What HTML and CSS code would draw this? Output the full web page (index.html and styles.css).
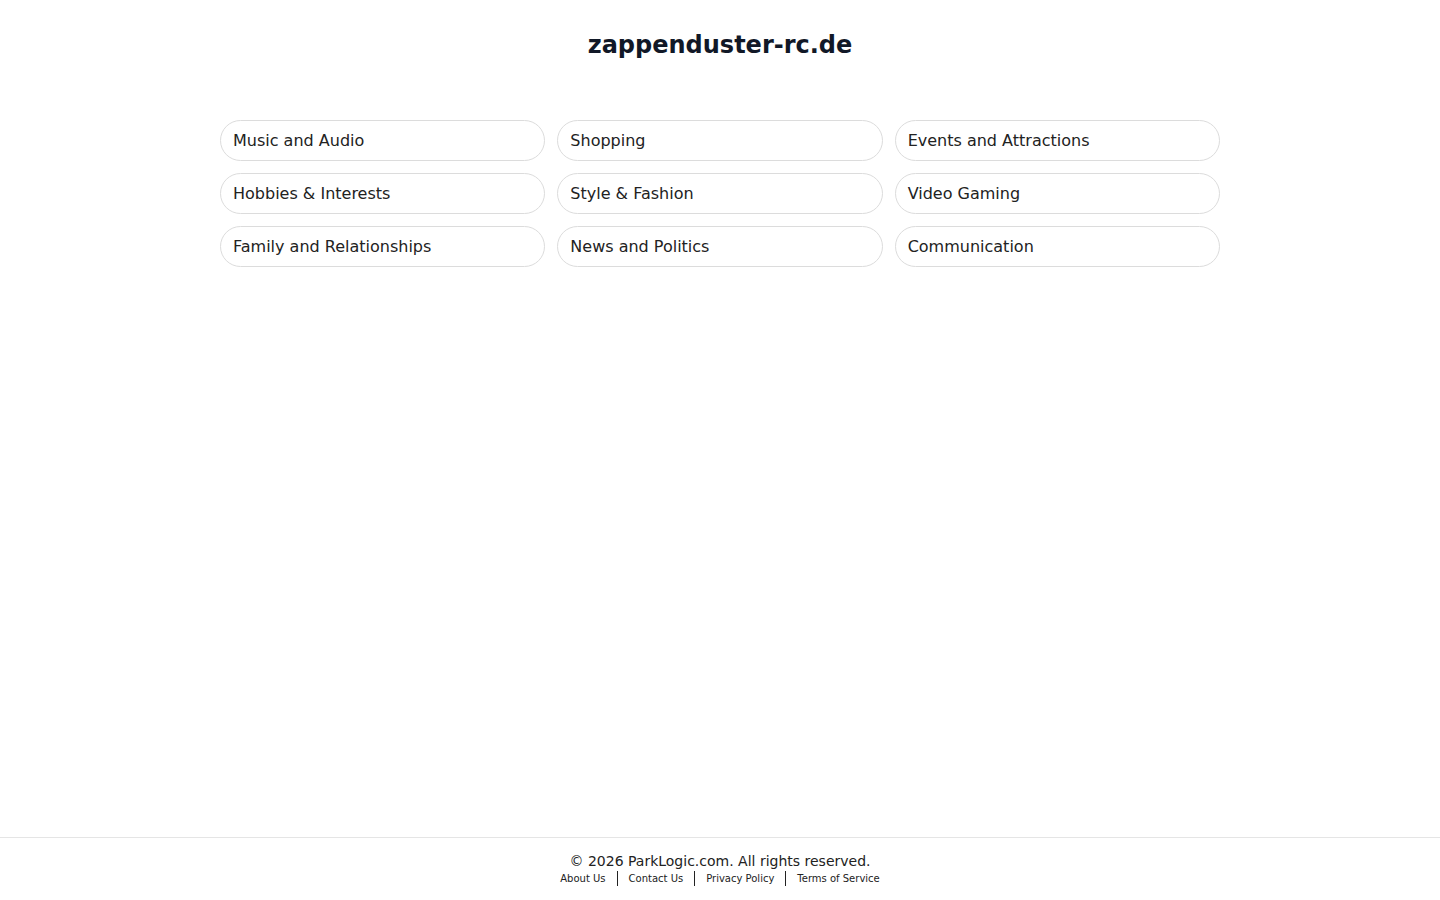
FILE: index.html
```html
<!DOCTYPE html>
<html lang="en">
<head>
<meta charset="utf-8">
<title>zappenduster-rc.de</title>
<link rel="stylesheet" href="styles.css">
</head>
<body>
<div class="page">
  <main class="main">
    <h1 class="title">zappenduster-rc.de</h1>
    <div class="grid">
      <a class="pill" href="#">Music and Audio</a>
      <a class="pill" href="#">Shopping</a>
      <a class="pill" href="#">Events and Attractions</a>
      <a class="pill" href="#">Hobbies &amp; Interests</a>
      <a class="pill" href="#">Style &amp; Fashion</a>
      <a class="pill" href="#">Video Gaming</a>
      <a class="pill" href="#">Family and Relationships</a>
      <a class="pill" href="#">News and Politics</a>
      <a class="pill" href="#">Communication</a>
    </div>
  </main>
  <footer class="footer">
    <div class="copy">© 2026 ParkLogic.com. All rights reserved.</div>
    <nav class="links">
      <a href="#">About Us</a>
      <span class="sep"></span>
      <a href="#">Contact Us</a>
      <span class="sep"></span>
      <a href="#">Privacy Policy</a>
      <span class="sep"></span>
      <a href="#">Terms of Service</a>
    </nav>
  </footer>
</div>
</body>
</html>
```
FILE: styles.css
```css
html, body {
  margin: 0;
  padding: 0;
  background: #ffffff;
}
body {
  font-family: "DejaVu Sans", sans-serif;
  color: #1a1a1a;
}
.page {
  min-height: 900px;
  display: flex;
  flex-direction: column;
}
.main {
  flex: 1;
  display: flex;
  flex-direction: column;
  align-items: center;
}
.title {
  margin: 0;
  padding-top: 31px;
  font-size: 24px;
  line-height: 28px;
  font-weight: bold;
  color: #111827;
}
.grid {
  margin-top: 61px;
  width: 1000px;
  display: grid;
  grid-template-columns: repeat(3, 1fr);
  column-gap: 12px;
  row-gap: 12px;
}
.pill {
  display: flex;
  align-items: center;
  height: 41px;
  box-sizing: border-box;
  padding: 0 12px;
  border: 1px solid #dcdcdc;
  border-radius: 21px;
  font-size: 16px;
  color: #222222;
  text-decoration: none;
}
.footer {
  border-top: 1px solid #e5e5e5;
  height: 63px;
  box-sizing: border-box;
  padding-top: 15px;
  display: flex;
  flex-direction: column;
  align-items: center;
}
.copy {
  font-size: 14px;
  line-height: 17px;
  color: #222222;
}
.links {
  display: flex;
  align-items: center;
  gap: 11px;
  margin-top: 1px;
}
.links a {
  font-size: 10px;
  line-height: 14px;
  color: #222222;
  text-decoration: none;
}
.sep {
  width: 1px;
  height: 15px;
  background: #222222;
}
```
